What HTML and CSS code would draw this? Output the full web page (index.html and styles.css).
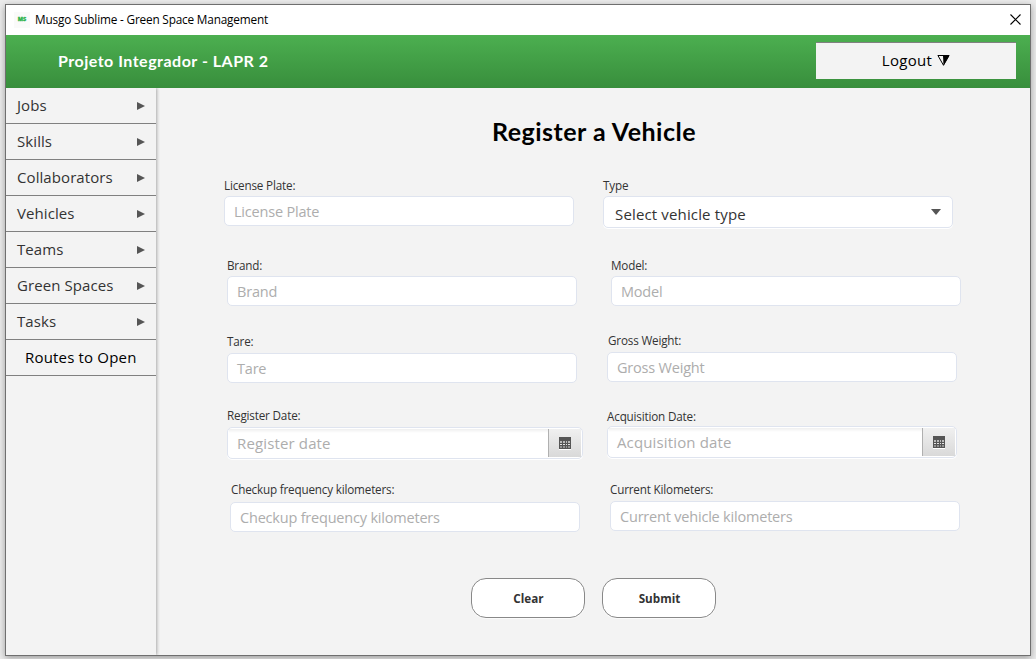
FILE: index.html
```html
<!DOCTYPE html>
<html lang="en">
<head>
<meta charset="utf-8">
<title>Musgo Sublime - Green Space Management</title>
<link rel="stylesheet" href="styles.css">
</head>
<body>
<svg width="0" height="0" class="defs" aria-hidden="true">
  <symbol id="calendar" viewBox="0 0 12 13">
    <rect y="12" width="12" height="1" fill="#fff"/>
    <rect width="12" height="12" fill="#555"/>
    <g fill="#b9b9b9">
      <path d="M1 4h2v2H1zM4 4h2v2H4zM7 4h1v2H7zM9 4h2v2H9z"/>
      <path d="M1 7h2v1H1zM4 7h2v1H4zM7 7h1v1H7zM9 7h2v1H9z" fill="#e4e4e4"/>
      <path d="M1 9h2v2H1zM4 9h2v2H4zM7 9h1v2H7zM9 9h2v2H9z" fill="#929292"/>
    </g>
  </symbol>
</svg>
<div class="window">
  <div class="titlebar">
    <span class="logo">MS</span>
    <span class="titlebar-text">Musgo Sublime - Green Space Management</span>
    <svg class="close" width="11" height="11" viewBox="0 0 11 11"><path d="M.5.5l10 10M10.5.5l-10 10" stroke="#000" stroke-width="1.1" fill="none"/></svg>
  </div>
  <header class="header">
    <div class="brand">Projeto Integrador - LAPR 2</div>
    <div class="logout"><span>Logout</span>
      <svg width="13" height="11" viewBox="0 0 13 11"><path d="M.9.5h11.2L6.5 10.3z" fill="none" stroke="#000" stroke-width="1"/><path d="M6 .5h6.3L6.5 10.6z" fill="#000"/></svg>
    </div>
  </header>
  <div class="body">
    <nav class="sidebar">
      <div class="item"><span>Jobs</span><i class="arrow"></i></div>
      <div class="item"><span>Skills</span><i class="arrow"></i></div>
      <div class="item"><span>Collaborators</span><i class="arrow"></i></div>
      <div class="item"><span>Vehicles</span><i class="arrow"></i></div>
      <div class="item"><span>Teams</span><i class="arrow"></i></div>
      <div class="item"><span>Green Spaces</span><i class="arrow"></i></div>
      <div class="item"><span>Tasks</span><i class="arrow"></i></div>
      <div class="item plain"><span>Routes to Open</span></div>
    </nav>
    <main class="main">
      <h1 class="title">Register a Vehicle</h1>
      <div class="form">
        <div class="column">
          <div class="field plate"><label>License Plate:</label><div class="input">License Plate</div></div>
          <div class="field make"><label>Brand:</label><div class="input">Brand</div></div>
          <div class="field tare"><label>Tare:</label><div class="input">Tare</div></div>
          <div class="field register"><label>Register Date:</label>
            <div class="date"><span class="date-text">Register date</span><span class="date-button"><svg width="12" height="13"><use href="#calendar"/></svg></span></div></div>
          <div class="field checkup"><label>Checkup frequency kilometers:</label><div class="input">Checkup frequency kilometers</div></div>
        </div>
        <div class="column">
          <div class="field type"><label>Type</label><div class="select">Select vehicle type<i class="caret"></i></div></div>
          <div class="field model"><label>Model:</label><div class="input">Model</div></div>
          <div class="field gross"><label>Gross Weight:</label><div class="input">Gross Weight</div></div>
          <div class="field acquisition"><label>Acquisition Date:</label>
            <div class="date"><span class="date-text">Acquisition date</span><span class="date-button"><svg width="12" height="13"><use href="#calendar"/></svg></span></div></div>
          <div class="field current"><label>Current Kilometers:</label><div class="input">Current vehicle kilometers</div></div>
        </div>
      </div>
      <div class="actions"><div class="button">Clear</div><div class="button">Submit</div></div>
    </main>
  </div>
</div>
</body>
</html>
```
FILE: styles.css
```css
* { box-sizing: border-box; }
body {
  margin: 0;
  height: 659px;
  padding: 4px 5px 3px;
  overflow: hidden;
  background: #ececec;
  font-family: "Open Sans", "Noto Sans", sans-serif;
  color: #333;
}
.defs { position: absolute; }
.window {
  width: 1026px;
  height: 652px;
  border: 1px solid #6f6f6f;
  background: #f3f3f3;
  box-shadow: 0 2px 7px rgba(0, 0, 0, .35);
  display: flex;
  flex-direction: column;
}
.titlebar {
  height: 30px;
  flex: none;
  background: #fff;
  display: flex;
  align-items: center;
  padding: 0 9px 0 8px;
}
.logo {
  width: 16px;
  height: 16px;
  background: #fafafa;
  color: #2db34a;
  font: 800 5.5px/15px "Open Sans", sans-serif;
  text-align: center;
  -webkit-text-stroke: .3px #2db34a;
}
.titlebar-text {
  flex: 1;
  margin-left: 5px;
  padding-bottom: 2px;
  font-size: 11.8px;
  letter-spacing: -.18px;
  color: #000;
}
.close { margin-top: -2px; }
.header {
  height: 53px;
  flex: none;
  background: linear-gradient(#4caf50, #388e3c);
  display: flex;
  justify-content: space-between;
  padding: 7px 14px 0 52px;
}
.brand {
  font: 700 16px/38px Lato, sans-serif;
  letter-spacing: .5px;
  color: #fff;
}
.logout {
  width: 200px;
  height: 37px;
  border-top: 1px solid #808080;
  background: #f3f3f3;
  color: #000;
  font-size: 15px;
  letter-spacing: .3px;
  display: flex;
  align-items: center;
  justify-content: center;
  gap: 5px;
  padding-bottom: 2px;
}
.body { flex: 1; display: flex; }
.sidebar {
  width: 150px;
  background: #f3f3f3;
  box-shadow: 1px 0 3px rgba(0, 0, 0, .3);
  clip-path: inset(0 -6px 0 0);
}
.item {
  height: 36px;
  border-bottom: 1px solid #808080;
  padding: 0 11px;
  display: flex;
  align-items: center;
  justify-content: space-between;
  font-size: 15px;
  letter-spacing: .08px;
}
.item span { padding-bottom: 2px; }
.plain { color: #000; padding-left: 19px; letter-spacing: .18px; }
.arrow {
  border-left: 8px solid #555;
  border-top: 4px solid transparent;
  border-bottom: 4px solid transparent;
}
.main { flex: 1; }
.title {
  margin: 25px 0 0;
  padding-left: 2px;
  font: 700 25px/36px Lato, sans-serif;
  letter-spacing: .5px;
  color: #000;
  text-align: center;
}
.form {
  height: 354px;
  margin: 29px 0 0 68px;
  display: grid;
  grid-template-columns: 379px 360px;
}
.field label {
  display: block;
  height: 16px;
  font-size: 11.7px;
  line-height: 14px;
  letter-spacing: -.18px;
  color: #333;
}
.input, .select, .date {
  width: 350px;
  border: 1px solid #dfe4ef;
  border-radius: 5px;
  background: #fff;
  margin-top: 2px;
}
.input {
  height: 30px;
  padding-left: 9px;
  font-size: 14.5px;
  line-height: 29px;
  letter-spacing: -.2px;
  color: #adadad;
}
.select {
  height: 32px;
  padding: 4px 11px 0;
  display: flex;
  justify-content: space-between;
  align-items: center;
  font-size: 15px;
  letter-spacing: .15px;
  box-shadow: 0 1px #fff;
}
.caret {
  margin-top: -4px;
  border-top: 6px solid #555;
  border-left: 5.5px solid transparent;
  border-right: 5.5px solid transparent;
}
.date {
  height: 32px;
  display: flex;
  padding: 1px;
  box-shadow: 0 1px #fff;
}
.date-text {
  flex: 1;
  padding-left: 8px;
  font-size: 15px;
  line-height: 29px;
  letter-spacing: .14px;
  color: #adadad;
  background: linear-gradient(#efefef, #fff 4px);
}
.date-button {
  width: 33px;
  border-left: 1px solid #b0b0b0;
  background: linear-gradient(#f0f0f0, #d9d9d9);
  display: flex;
  align-items: center;
  justify-content: center;
}
.make { margin: 32px 0 0 3px; }
.tare { margin: 28px 0 0 3px; }
.register { margin: 25px 0 0 3px; }
.checkup { margin: 23px 0 0 6px; }
.model { margin: 30px 0 0 8px; }
.gross { margin: 27px 0 0 4px; }
.acquisition { margin: 27px 0 0 4px; }
.current { margin: 24px 0 0 7px; }
.tare .input, .gross .input, .register .date { margin-top: 3px; }
.acquisition .date { margin-top: 1px; }
.checkup .input { margin-top: 4px; }
.current .input { margin-top: 3px; }
.register .date { width: 356px; }
.checkup label { padding-left: 1px; }
.gross label { padding-left: 1px; }
.actions {
  margin: 46px 0 0 315px;
  display: flex;
  gap: 17px;
}
.button {
  width: 114px;
  height: 40px;
  border: 1px solid #888;
  border-radius: 15px;
  background: #fff;
  text-align: center;
  font-size: 11.7px;
  font-weight: 700;
  line-height: 39px;
  padding-left: 1px;
  box-shadow: 0 1px #fbfbfb;
}
```
